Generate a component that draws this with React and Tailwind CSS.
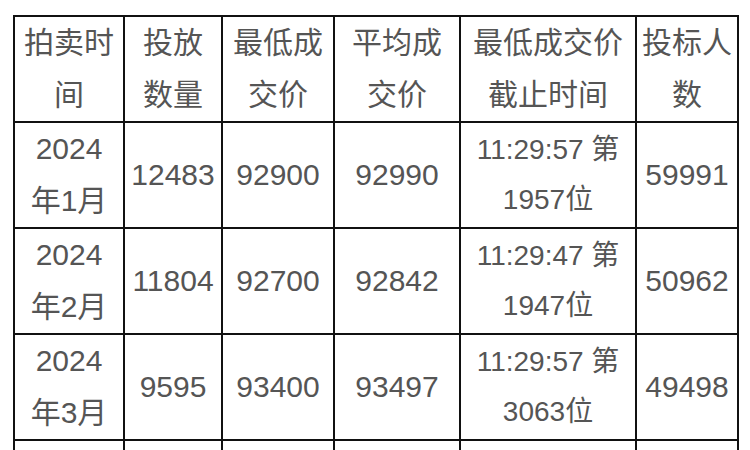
import React from "react";

const cols = [110, 98, 112, 126, 176, 102];

const header = [
  ["拍卖时", "间"],
  ["投放", "数量"],
  ["最低成", "交价"],
  ["平均成", "交价"],
  ["最低成交价", "截止时间"],
  ["投标人", "数"],
];

const rows = [
  [["2024", "年1月"], ["12483"], ["92900"], ["92990"], ["11:29:57 第", "1957位"], ["59991"]],
  [["2024", "年2月"], ["11804"], ["92700"], ["92842"], ["11:29:47 第", "1947位"], ["50962"]],
  [["2024", "年3月"], ["9595"], ["93400"], ["93497"], ["11:29:57 第", "3063位"], ["49498"]],
  [[], [], [], [], [], []],
];

function Cell({ lines, smaller }) {
  return (
    <td className="border-2 border-[#111] p-0 text-center align-middle h-[106px]">
      {lines.map((l, i) => (
        <div key={i} className={smaller ? "whitespace-nowrap leading-[50px] text-[28px]" : "whitespace-nowrap leading-[52px]"}>
          {l}
        </div>
      ))}
    </td>
  );
}

export default function App() {
  return (
    <div className="w-[750px] h-[450px] overflow-hidden bg-white pt-[15px] pl-[13px]">
      <table
        className="border-collapse table-fixed text-[#555] text-[30px]"
        style={{ fontFamily: '"Liberation Sans", "Noto Sans CJK SC", sans-serif' }}
      >
        <colgroup>
          {cols.map((w, i) => (
            <col key={i} style={{ width: w }} />
          ))}
        </colgroup>
        <thead>
          <tr>
            {header.map((h, i) => (
              <th key={i} className="border-2 border-[#111] p-0 font-normal text-center align-middle h-[106px]">
                {h.map((l, j) => (
                  <div key={j} className="whitespace-nowrap leading-[52px]">{l}</div>
                ))}
              </th>
            ))}
          </tr>
        </thead>
        <tbody>
          {rows.map((r, i) => (
            <tr key={i}>
              {r.map((c, j) => (
                <Cell key={j} lines={c} smaller={j === 4} />
              ))}
            </tr>
          ))}
        </tbody>
      </table>
    </div>
  );
}
